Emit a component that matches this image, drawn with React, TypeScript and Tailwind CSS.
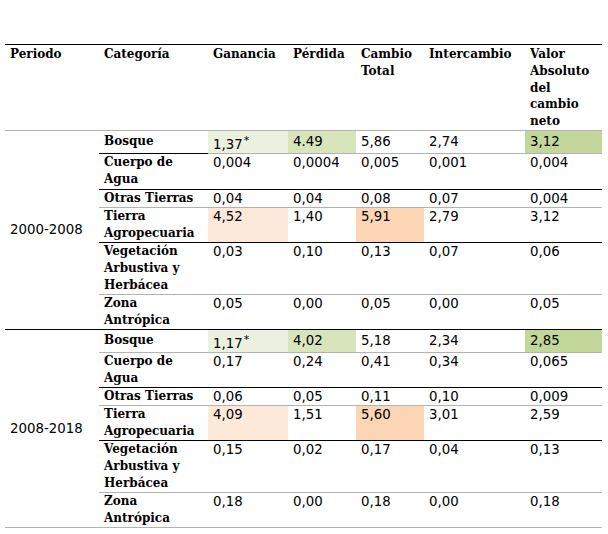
import React from 'react';

type Row = {
  cat: string;
  g: string;
  p: string;
  c: string;
  i: string;
  v: string;
  border: 'gray' | 'black';
  sup?: boolean;
  extra?: string;
  gBg?: string;
  pBg?: string;
  cBg?: string;
  vBg?: string;
  catBorder?: string;
};

const periods: { label: string; bottom: string; rows: Row[] }[] = [
  {
    label: '2000-2008',
    bottom: 'border-b-black',
    rows: [
      { cat: 'Bosque', g: '1,37', p: '4.49', c: '5,86', i: '2,74', v: '3,12', border: 'gray', sup: true, gBg: 'bg-[#ebf1de]', pBg: 'bg-[#d8e4bc]', vBg: 'bg-[#c4d79b]', catBorder: 'border-b-black' },
      { cat: 'Cuerpo de Agua', g: '0,004', p: '0,0004', c: '0,005', i: '0,001', v: '0,004', border: 'black', extra: 'pb-[1px]' },
      { cat: 'Otras Tierras', g: '0,04', p: '0,04', c: '0,08', i: '0,07', v: '0,004', border: 'gray' },
      { cat: 'Tierra Agropecuaria', g: '4,52', p: '1,40', c: '5,91', i: '2,79', v: '3,12', border: 'black', gBg: 'bg-[#fde9d9]', cBg: 'bg-[#fcd5b4]' },
      { cat: 'Vegetación Arbustiva y Herbácea', g: '0,03', p: '0,10', c: '0,13', i: '0,07', v: '0,06', border: 'gray' },
      { cat: 'Zona Antrópica', g: '0,05', p: '0,00', c: '0,05', i: '0,00', v: '0,05', border: 'black' },
    ],
  },
  {
    label: '2008-2018',
    bottom: 'border-b-[#b3b3b3]',
    rows: [
      { cat: 'Bosque', g: '1,17', p: '4,02', c: '5,18', i: '2,34', v: '2,85', border: 'gray', sup: true, gBg: 'bg-[#ebf1de]', pBg: 'bg-[#d8e4bc]', vBg: 'bg-[#c4d79b]' },
      { cat: 'Cuerpo de Agua', g: '0,17', p: '0,24', c: '0,41', i: '0,34', v: '0,065', border: 'black' },
      { cat: 'Otras Tierras', g: '0,06', p: '0,05', c: '0,11', i: '0,10', v: '0,009', border: 'gray' },
      { cat: 'Tierra Agropecuaria', g: '4,09', p: '1,51', c: '5,60', i: '3,01', v: '2,59', border: 'black', gBg: 'bg-[#fde9d9]', cBg: 'bg-[#fcd5b4]' },
      { cat: 'Vegetación Arbustiva y Herbácea', g: '0,15', p: '0,02', c: '0,17', i: '0,04', v: '0,13', border: 'gray' },
      { cat: 'Zona Antrópica', g: '0,18', p: '0,00', c: '0,18', i: '0,00', v: '0,18', border: 'gray' },
    ],
  },
];

const head = "font-['DejaVu_Serif',serif] font-bold text-[12px] leading-[16.8px] text-black";
const num = "font-['DejaVu_Sans',sans-serif] text-[13.33px] leading-[17px] text-black";

export default function App() {
  return (
    <div className="w-[608px] h-[534px] bg-white pt-[44px] pl-[5px]">
      <table className="w-[597px] table-fixed border-collapse">
        <colgroup>
          <col className="w-[94px]" />
          <col className="w-[109px]" />
          <col className="w-[80px]" />
          <col className="w-[68px]" />
          <col className="w-[68px]" />
          <col className="w-[101px]" />
          <col className="w-[77px]" />
        </colgroup>
        <thead>
          <tr className="border-t border-t-black border-b border-b-[#b3b3b3]">
            {['Periodo', 'Categoría', 'Ganancia', 'Pérdida', 'Cambio Total', 'Intercambio', 'Valor Absoluto del cambio neto'].map((h) => (
              <th key={h} className={`${head} text-left align-top px-[5px] pt-[1px] pb-0 h-[85px]`}>
                {h}
              </th>
            ))}
          </tr>
        </thead>
        <tbody>
          {periods.map((per) =>
            per.rows.map((r, idx) => {
              const b = r.border === 'black' ? 'border-b-black' : 'border-b-[#b3b3b3]';
              const cell = `${num} align-top px-[5px] border-b ${b} ${r.extra ?? ''}`;
              const pad = r.sup ? 'pt-[2px]' : 'pt-0';
              return (
                <tr key={per.label + r.cat} className={r.sup ? 'h-[22px]' : ''}>
                  {idx === 0 && (
                    <td rowSpan={6} className={`${num} align-middle px-[5px] border-b ${per.bottom}`}>
                      {per.label}
                    </td>
                  )}
                  <td className={`${head} leading-[17px] align-top px-[5px] border-b ${r.catBorder ?? b} ${pad} ${r.extra ?? ''}`}>{r.cat}</td>
                  <td className={`${cell} ${r.gBg ?? ''} ${r.sup ? 'pt-[5px]' : 'pt-0'}`}>
                    {r.g}
                    {r.sup && <sup className="text-[11px] relative -top-[5px] ml-[1px]">*</sup>}
                  </td>
                  <td className={`${cell} ${r.pBg ?? ''} ${pad}`}>{r.p}</td>
                  <td className={`${cell} ${r.cBg ?? ''} ${pad}`}>{r.c}</td>
                  <td className={`${cell} ${pad}`}>{r.i}</td>
                  <td className={`${cell} ${r.vBg ?? ''} ${pad}`}>{r.v}</td>
                </tr>
              );
            })
          )}
        </tbody>
      </table>
    </div>
  );
}
